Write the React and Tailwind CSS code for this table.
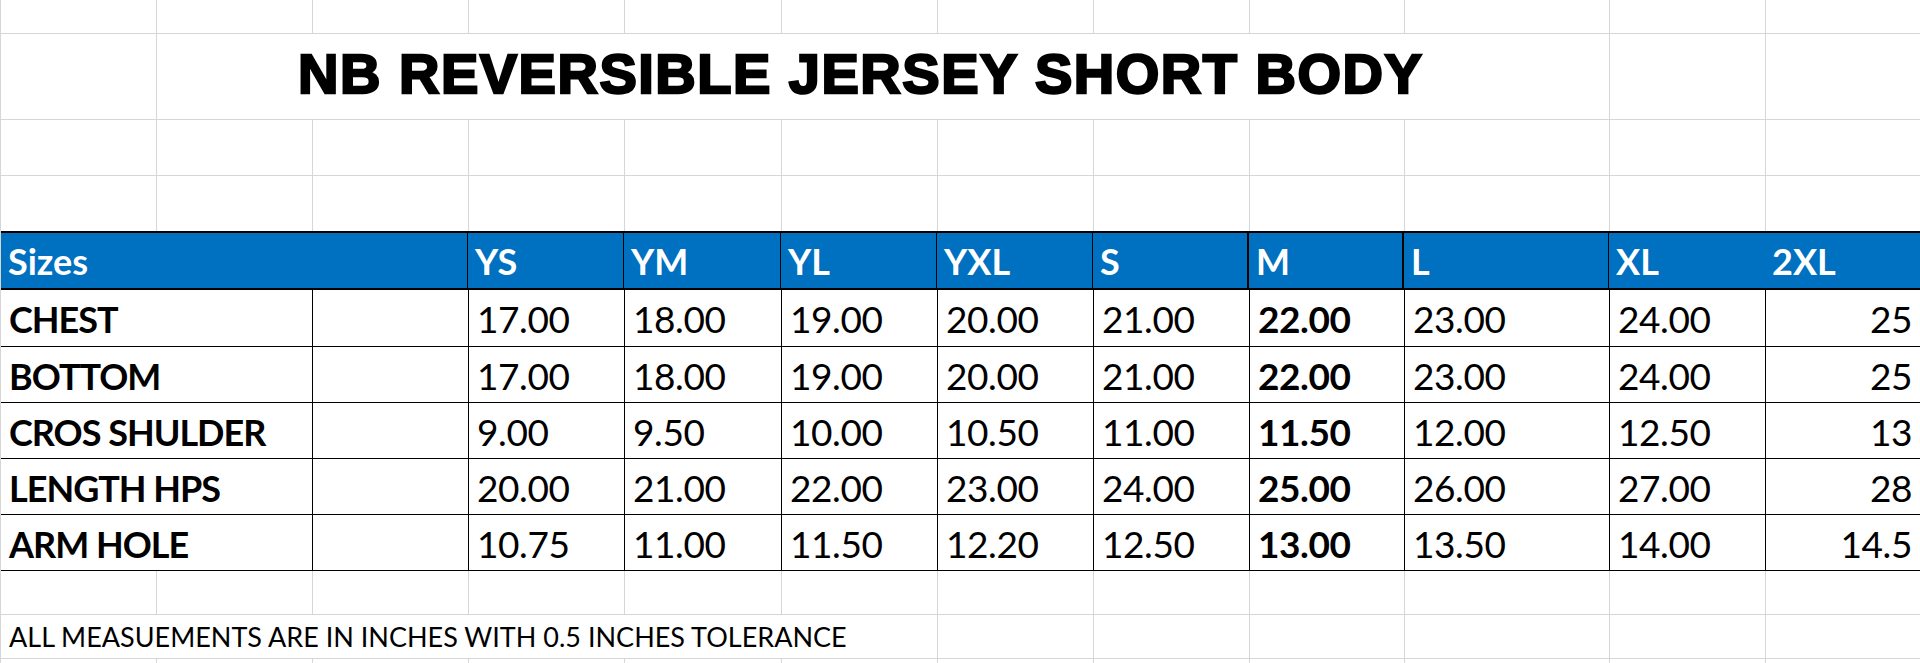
import React from "react";

const W = [156, 156, 156, 156, 157, 156, 156, 156, 155, 205, 156, 155];

function GrayRow({ h, bottom = true }) {
  return (
    <div className={`flex ${bottom ? "border-b border-[#d6d6d6]" : ""}`} style={{ height: h }}>
      {W.map((w, i) => (
        <div key={i} className="shrink-0 border-r border-[#d6d6d6]" style={{ width: w }} />
      ))}
    </div>
  );
}

const sizes = ["YS", "YM", "YL", "YXL", "S", "M", "L", "XL", "2XL"];
const rows = [
  ["CHEST", ["17.00", "18.00", "19.00", "20.00", "21.00", "22.00", "23.00", "24.00", "25"], 57],
  ["BOTTOM", ["17.00", "18.00", "19.00", "20.00", "21.00", "22.00", "23.00", "24.00", "25"], 56],
  ["CROS SHULDER", ["9.00", "9.50", "10.00", "10.50", "11.00", "11.50", "12.00", "12.50", "13"], 56],
  ["LENGTH HPS", ["20.00", "21.00", "22.00", "23.00", "24.00", "25.00", "26.00", "27.00", "28"], 56],
  ["ARM HOLE", ["10.75", "11.00", "11.50", "12.20", "12.50", "13.00", "13.50", "14.00", "14.5"], 56],
];

export default function App() {
  const valW = W.slice(3);
  return (
    <div className="w-[1920px] h-[663px] overflow-hidden bg-white text-black font-['Lato',sans-serif] border-l border-[#d6d6d6]">
      <GrayRow h={34} />
      {/* title row */}
      <div className="flex h-[86px] border-b border-[#d6d6d6]">
        <div className="w-[156px] shrink-0 border-r border-[#d6d6d6]" />
        <div className="w-[1453px] shrink-0 border-r border-[#d6d6d6] flex items-center pl-[141px] pb-[5px]">
          <span className="font-['Liberation_Sans',Arial,sans-serif] font-bold text-[56px] leading-none tracking-[1.5px] [-webkit-text-stroke:2.4px_black] whitespace-nowrap">
            NB REVERSIBLE JERSEY SHORT BODY
          </span>
        </div>
        <div className="w-[156px] shrink-0 border-r border-[#d6d6d6]" />
        <div className="w-[155px] shrink-0 border-r border-[#d6d6d6]" />
      </div>
      <GrayRow h={56} />
      <GrayRow h={55} bottom={false} />
      {/* header */}
      <div className="flex h-[59px] bg-[#0070c0] border-t-2 border-b-2 border-black text-white font-bold text-[36px]">
        <div className="w-[468px] shrink-0 border-r border-black flex items-center pl-[8px] -ml-px">
          Sizes
        </div>
        {sizes.map((s, i) => {
          const isM = s === "M";
          const isXL = s === "XL";
          const isLast = i === sizes.length - 1;
          const before = sizes[i + 1] === "M";
          return (
            <div
              key={s}
              className={`shrink-0 flex items-center pl-[7px] ${
                isXL || isLast ? "" : before || isM ? "border-r-2 border-black" : "border-r border-black"
              }`}
              style={{ width: valW[i] }}
            >
              {s}
            </div>
          );
        })}
      </div>
      {/* data rows */}
      {rows.map(([label, vals, h]) => (
        <div key={label} className="flex border-b border-black border-l -ml-px" style={{ height: h }}>
          <div className="w-[312px] shrink-0 border-r border-black flex items-center pl-[8px] pt-[2px] font-bold text-[36px] tracking-[-1px] whitespace-nowrap">
            {label}
          </div>
          <div className="w-[156px] shrink-0 border-r border-black" />
          {vals.map((v, i) => {
            const isM = i === 5;
            const isLast = i === vals.length - 1;
            return (
              <div
                key={i}
                className={`shrink-0 flex items-center pt-[2px] text-[37px] tracking-[-0.4px] ${isLast ? "justify-end pr-[9px]" : "pl-[8px] border-r border-black"} ${isM ? "font-bold" : ""}`}
                style={{ width: valW[i] }}
              >
                {v}
              </div>
            );
          })}
        </div>
      ))}
      <GrayRow h={44} />
      {/* footer row */}
      <div className="flex h-[44px] border-b border-[#d6d6d6]">
        <div className="w-[937px] shrink-0 border-r border-[#d6d6d6] flex items-center pl-[8px] pt-[2px] text-[27px] whitespace-nowrap">
          ALL MEASUEMENTS ARE IN INCHES WITH 0.5 INCHES TOLERANCE
        </div>
        {W.slice(6).map((w, i) => (
          <div key={i} className="shrink-0 border-r border-[#d6d6d6]" style={{ width: w }} />
        ))}
      </div>
      <GrayRow h={20} />
    </div>
  );
}
